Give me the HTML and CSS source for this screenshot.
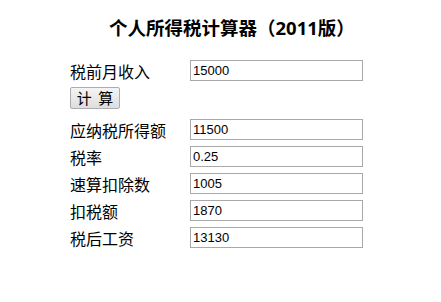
FILE: index.html
```html
<!DOCTYPE html>
<html lang="zh-CN">
<head>
<meta charset="utf-8">
<title>个人所得税计算器</title>
<link rel="stylesheet" href="styles.css">
</head>
<body>
<h3 class="title">个人所得税计算器（2011版）</h3>
<div class="form">
  <div class="row"><span class="label">税前月收入</span><input class="field" type="text" value="15000"></div>
  <div class="row row-btn"><button class="btn" type="button">计 算</button></div>
  <div class="row"><span class="label">应纳税所得额</span><input class="field" type="text" value="11500"></div>
  <div class="row"><span class="label">税率</span><input class="field" type="text" value="0.25"></div>
  <div class="row"><span class="label">速算扣除数</span><input class="field" type="text" value="1005"></div>
  <div class="row"><span class="label">扣税额</span><input class="field" type="text" value="1870"></div>
  <div class="row"><span class="label">税后工资</span><input class="field" type="text" value="13130"></div>
</div>
</body>
</html>
```
FILE: styles.css
```css
html, body {
  margin: 0;
  padding: 0;
  background: #ffffff;
}
body {
  font-family: "Noto Sans CJK SC", "Noto Sans", sans-serif;
  color: #000000;
}
.title {
  margin: 0;
  padding: 14px 0 0 109px;
  font-family: "Noto Sans", "Noto Sans CJK SC", sans-serif;
  font-size: 18.5px;
  line-height: 28px;
  font-weight: bold;
  white-space: nowrap;
}
.form {
  margin-top: 15px;
  padding-left: 70px;
  display: flex;
  flex-direction: column;
}
.row {
  display: flex;
  align-items: center;
  height: 27px;
}
.row-btn {
  height: 32px;
  align-items: flex-start;
  padding-top: 3px;
  box-sizing: border-box;
}
.label {
  width: 120px;
  font-size: 16px;
  line-height: 20px;
  white-space: nowrap;
}
.field {
  box-sizing: border-box;
  width: 173px;
  height: 21px;
  margin: 0;
  padding: 0 2px;
  border: 1px solid #a9a9a9;
  border-radius: 0;
  font-family: "Liberation Sans", Arial, sans-serif;
  font-size: 13px;
  color: #000000;
  background: #ffffff;
  outline: none;
}
.btn {
  box-sizing: border-box;
  width: 50px;
  height: 22px;
  margin: 0;
  padding: 0;
  border: 1px solid #adadad;
  border-radius: 2px;
  background: linear-gradient(#f4f4f4, #dedede);
  font-family: "Noto Sans CJK SC", sans-serif;
  font-size: 15px;
  line-height: 20px;
  word-spacing: 3px;
  color: #000000;
}
```
